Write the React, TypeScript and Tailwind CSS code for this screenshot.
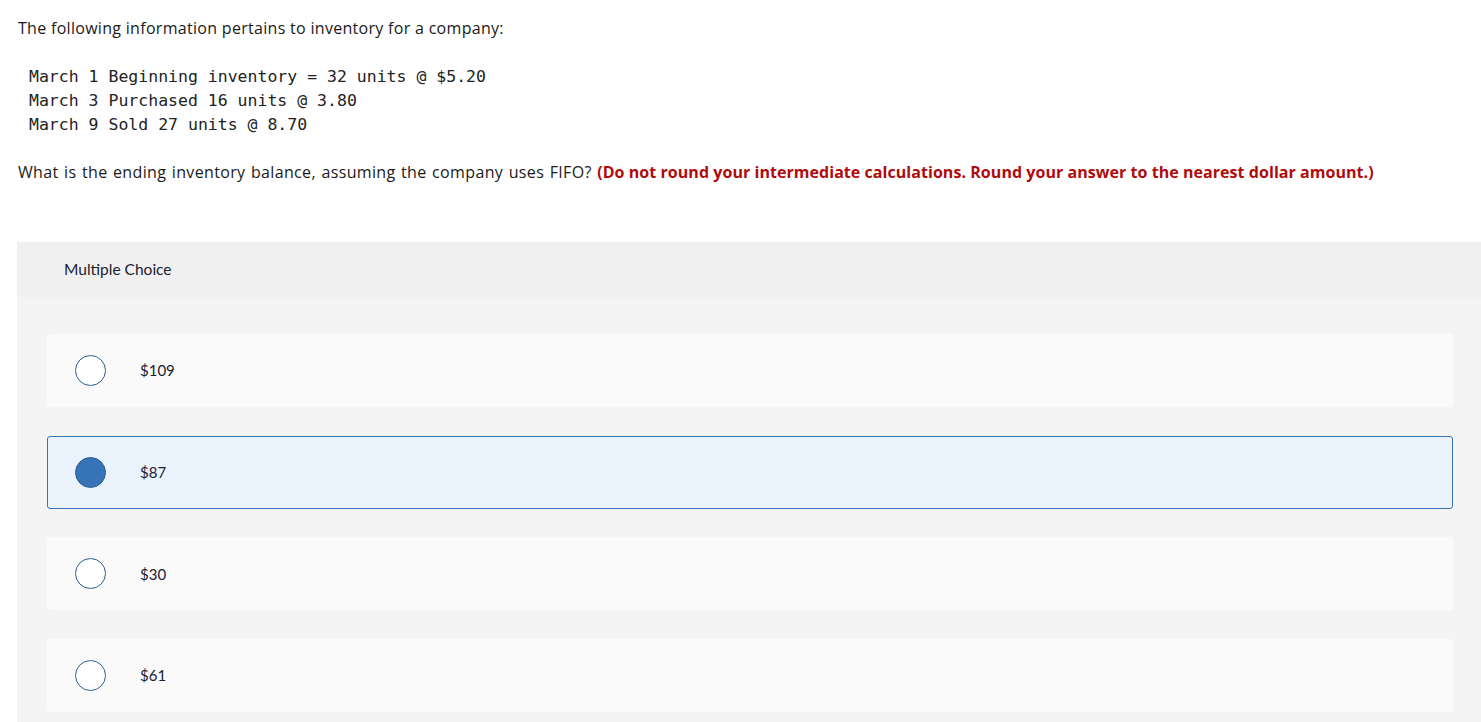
import { useState } from "react";

const choices = ["$109", "$87", "$30", "$61"];

const lines = [
  "March 1 Beginning inventory = 32 units @ $5.20",
  "March 3 Purchased 16 units @ 3.80",
  "March 9 Sold 27 units @ 8.70",
];

export default function App() {
  const [picked, setPicked] = useState(1);

  return (
    <div className="w-[1481px] h-[722px] overflow-hidden bg-white text-[#1a1a1a] font-['Open_Sans',sans-serif]">
      <p className="pl-[18px] pt-[16px] text-[16px] leading-[24px] tracking-[0.3px]">
        The following information pertains to inventory for a company:
      </p>

      <div className="pl-[29px] mt-[25px] font-['DejaVu_Sans_Mono',monospace] text-[16.5px] leading-[24px] text-[#222]">
        {lines.map((l) => (
          <div key={l} className="whitespace-pre">
            {l}
          </div>
        ))}
      </div>

      <p className="pl-[18px] mt-[23px] text-[16px] leading-[24px] tracking-[0.35px] [word-spacing:1px]">
        What is the ending inventory balance, assuming the company uses FIFO?{" "}
        <span className="font-bold tracking-[0.05px] [word-spacing:0px] text-[#b00b0b]">
          (Do not round your intermediate calculations. Round your answer to the nearest dollar amount.)
        </span>
      </p>

      <div className="ml-[17px] mt-[58px] w-[1466px] bg-[#f4f4f4]">
        <div className="h-[55px] bg-[#f0f0f0] flex items-center pl-[47px] text-[15.5px] text-[#1c2230] font-['Lato',sans-serif]">
          Multiple Choice
        </div>
        <div className="flex flex-col gap-[28.7px] pt-[37px] pb-[20px] pl-[30px] pr-[30px]">
          {choices.map((c, i) => {
            const sel = picked === i;
            return (
              <button
                key={c}
                onClick={() => setPicked(i)}
                className={
                  sel
                    ? "h-[73px] w-full flex items-center rounded-[3px] border border-[#3673b7] bg-[#eaf2fb] text-left"
                    : "h-[73px] w-full flex items-center rounded-[3px] border border-transparent bg-[#fafafa] text-left"
                }
              >
                <span
                  className={
                    sel
                      ? "ml-[27px] w-[31px] h-[31px] rounded-full border border-[#2d5f96] bg-[#3673b7]"
                      : "ml-[27px] w-[31px] h-[31px] rounded-full border-[1.5px] border-[#2d5f96] bg-white"
                  }
                />
                <span className="ml-[34px] text-[15px] text-[#1c2230] font-['Lato',sans-serif]">{c}</span>
              </button>
            );
          })}
        </div>
      </div>
    </div>
  );
}
